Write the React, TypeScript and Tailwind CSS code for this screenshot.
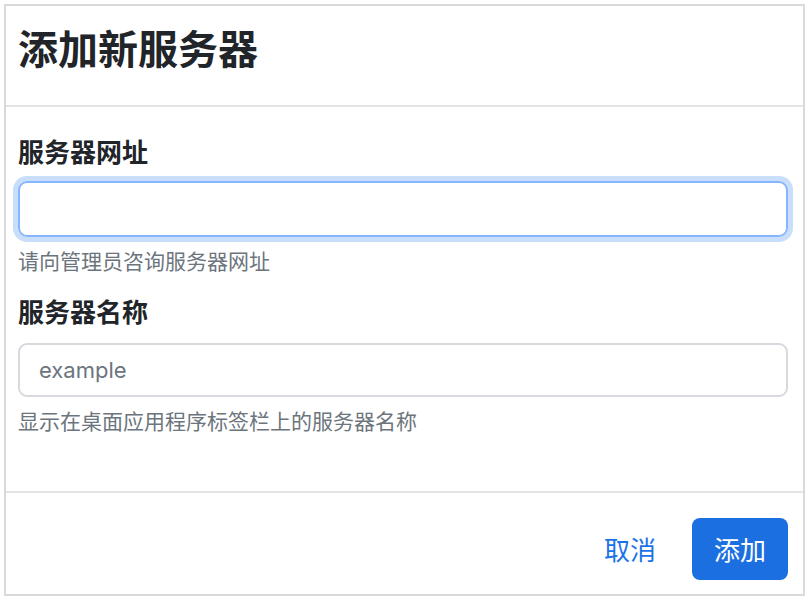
import { useState } from 'react';

const font = "font-['Inter','Noto_Sans_CJK_SC',sans-serif]";

export default function AddServerModal() {
  const [url, setUrl] = useState('');
  const [name, setName] = useState('');

  return (
    <div className={`min-h-screen bg-white pt-[4px] pl-[4px] ${font}`}>
      <div className="w-[801px] h-[592px] border-2 border-[#d9d9d9] bg-white flex flex-col">
        {/* Header */}
        <div className="h-[101px] shrink-0 pl-[12px] pt-[24px] border-b-2 border-[#e3e4e6]">
          <h1 className="text-[40px] leading-[40px] font-semibold text-[#212529]">添加新服务器</h1>
        </div>

        {/* Body */}
        <div className="h-[386px] shrink-0 pl-[12px] pr-[15px] border-b-2 border-[#e3e4e6]">
          <label className="block mt-[33px] text-[26px] leading-[26px] font-semibold text-[#212529]">
            服务器网址
          </label>
          <input
            value={url}
            onChange={(e) => setUrl(e.target.value)}
            className="block w-full mt-[15px] h-[56px] rounded-[9px] border-2 border-[#86b7fe] shadow-[0_0_0_5px_#c9defb] outline-none px-[19px] text-[22px] text-[#212529]"
          />
          <p className="mt-[14px] text-[21px] leading-[21px] text-[#6c757d]">请向管理员咨询服务器网址</p>

          <label className="block mt-[28px] text-[26px] leading-[26px] font-semibold text-[#212529]">
            服务器名称
          </label>
          <input
            value={name}
            onChange={(e) => setName(e.target.value)}
            placeholder="example"
            className="block w-full mt-[17px] h-[54px] rounded-[9px] border-2 border-[#d6d9dd] outline-none px-[19px] text-[22px] text-[#212529] placeholder:text-[#6c757d]"
          />
          <p className="mt-[14px] text-[21px] leading-[21px] text-[#6c757d]">显示在桌面应用程序标签栏上的服务器名称</p>
        </div>

        {/* Footer */}
        <div className="flex-1 flex items-start justify-end pt-[25px] pr-[15px]">
          <button className="mr-[36px] mt-[20px] text-[26px] leading-[26px] text-[#1a73e8]">取消</button>
          <button className="w-[96px] h-[62px] pt-[3px] rounded-[8px] bg-[#1b6fe0] text-white text-[26px] leading-[26px]">
            添加
          </button>
        </div>
      </div>
    </div>
  );
}
